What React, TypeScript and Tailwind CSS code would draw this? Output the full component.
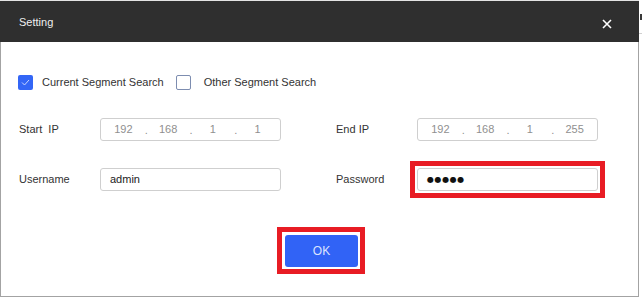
import React from "react";

function IpBox({ parts }: { parts: string[] }) {
  return (
    <div className="w-[181px] h-[23px] border border-[#cfcfcf] rounded-[3px] flex items-center text-[11px] text-[#8f8f8f]">
      {parts.map((p, i) => (
        <div key={i} className="relative w-[45px] text-center leading-[21px]">
          {p}
          {i < 3 && (
            <span className="absolute right-[-2px] top-[1px] text-[#8f8f8f]">.</span>
          )}
        </div>
      ))}
    </div>
  );
}

export default function App() {
  return (
    <div className="w-[642px] h-[299px] bg-white flex font-['Liberation_Sans',Arial,sans-serif] overflow-hidden">
      <div className="w-[639px] h-[297px] flex flex-col border-t border-[#e4e4e4]">
        <div className="h-[41px] bg-[#2f2f2f] flex items-center justify-between pl-[19px] pr-[27px] shrink-0">
          <span className="text-[11px] text-[#f0f0f0] mt-[1px]">Setting</span>
          <svg width="10" height="10" viewBox="0 0 10 10" className="mt-[4px]">
            <path d="M1 1 L9 9 M9 1 L1 9" stroke="#ffffff" strokeWidth="1.6" />
          </svg>
        </div>
        <div className="flex-1 flex flex-col border-l border-r border-b border-[#a3a3a3] pl-[18px] pt-[33px] text-[11px] text-[#333333]">
          <div className="flex items-center h-[15px] -ml-[1px]">
            <div className="w-[15px] h-[15px] rounded-[2px] bg-[#3366f6] flex items-center justify-center">
              <svg width="9" height="7" viewBox="0 0 9 7">
                <path d="M1 3.5 L3.5 6 L8 1" stroke="#c9d6ff" strokeWidth="1" fill="none" />
              </svg>
            </div>
            <span className="ml-[9px]">Current Segment Search</span>
            <div className="ml-[12px] w-[15px] h-[15px] rounded-[2px] border border-[#7d8db0] bg-white" />
            <span className="ml-[13px]">Other Segment Search</span>
          </div>

          <div className="flex items-center mt-[28px]">
            <span className="w-[81px]">Start&nbsp; IP</span>
            <IpBox parts={["192", "168", "1", "1"]} />
            <span className="w-[81px] ml-[55px]">End IP</span>
            <IpBox parts={["192", "168", "1", "255"]} />
          </div>

          <div className="flex items-center mt-[27px]">
            <span className="w-[81px]">Username</span>
            <div className="w-[181px] h-[23px] border border-[#cfcfcf] rounded-[3px] pl-[9px] flex items-center text-[#222222]">
              admin
            </div>
            <span className="w-[81px] ml-[55px]">Password</span>
            <div className="-m-[7px] border-[5px] border-[#e81c24] p-[2px]">
              <div className="w-[181px] h-[23px] border border-[#cfcfcf] rounded-[3px] pl-[9px] flex items-center text-[#111111]">
                <span className="text-[8px] tracking-[0.6px] font-['DejaVu_Sans',sans-serif]">●●●●●</span>
              </div>
            </div>
          </div>

          <div className="flex justify-center mt-[36px] pl-[3px] -ml-[18px]">
            <div className="border-[5px] border-[#e81c24] pt-[3px] pl-[3px] pr-[2px] pb-[2px]">
              <button className="w-[73px] h-[32px] rounded-[3px] bg-[#3163f6] text-[#dbe4ff] text-[12px] block">
                OK
              </button>
            </div>
          </div>
        </div>
      </div>
      <div className="flex-1 flex flex-col">
        <div className="h-[14px]" />
        <div className="h-[6px] bg-[#3a3a3a] w-[2px] ml-[1px]" />
        <div className="h-[13px]" />
        <div className="h-[1px] bg-[#d0d0d0]" />
      </div>
    </div>
  );
}
